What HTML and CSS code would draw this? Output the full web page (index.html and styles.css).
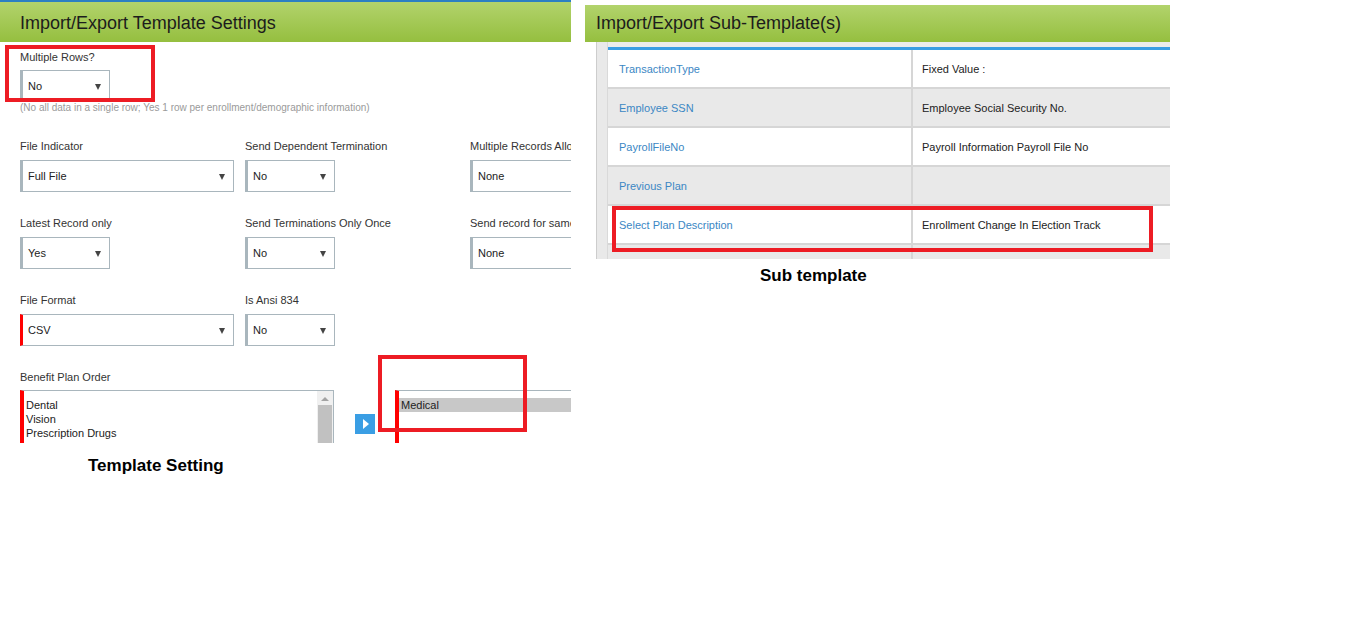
FILE: index.html
```html
<!DOCTYPE html>
<html lang="en">

<head>
  <meta charset="UTF-8">
  <meta name="viewport" content="width=device-width, initial-scale=1.0">
  <title>Import/Export Templates</title>
  <link rel="stylesheet" href="styles.css">
</head>

<body>
  <div class="page">
    <div class="col-left">
      <section class="panel settings">
        <h2 class="panel-head">Import/Export Template Settings</h2>
        <div class="panel-body">
          <div class="field-row first">
            <div class="field">
              <label>Multiple Rows?</label>
              <div class="select sm"><span>No</span><i class="caret"></i></div>
            </div>
          </div>
          <p class="hint">(No all data in a single row; Yes 1 row per enrollment/demographic information)</p>

          <div class="field-row">
            <div class="field">
              <label>File Indicator</label>
              <div class="select lg"><span>Full File</span><i class="caret"></i></div>
            </div>
            <div class="field">
              <label>Send Dependent Termination</label>
              <div class="select sm"><span>No</span><i class="caret"></i></div>
            </div>
            <div class="field">
              <label>Multiple Records Allowed</label>
              <div class="select lg"><span>None</span><i class="caret"></i></div>
            </div>
          </div>

          <div class="field-row">
            <div class="field">
              <label>Latest Record only</label>
              <div class="select sm"><span>Yes</span><i class="caret"></i></div>
            </div>
            <div class="field">
              <label>Send Terminations Only Once</label>
              <div class="select sm"><span>No</span><i class="caret"></i></div>
            </div>
            <div class="field">
              <label>Send record for same day changes</label>
              <div class="select lg"><span>None</span><i class="caret"></i></div>
            </div>
          </div>

          <div class="field-row">
            <div class="field">
              <label>File Format</label>
              <div class="select lg required"><span>CSV</span><i class="caret"></i></div>
            </div>
            <div class="field">
              <label>Is Ansi 834</label>
              <div class="select sm"><span>No</span><i class="caret"></i></div>
            </div>
          </div>

          <label class="plan-label">Benefit Plan Order</label>
          <div class="plan-row">
            <div class="listbox">
              <ul class="list-items">
                <li>Dental</li>
                <li>Vision</li>
                <li>Prescription Drugs</li>
              </ul>
              <div class="scrollbar">
                <i class="scroll-up"></i>
                <div class="scroll-thumb"></div>
              </div>
            </div>
            <button class="btn-move"><i></i></button>
            <div class="listbox target">
              <ul class="list-items">
                <li class="selected">Medical</li>
              </ul>
            </div>
          </div>
        </div>
        <div class="mark mark-rows"></div>
        <div class="mark mark-medical"></div>
      </section>
      <p class="caption caption-left">Template Setting</p>
    </div>

    <div class="col-right">
      <section class="panel subs">
        <h2 class="panel-head">Import/Export Sub-Template(s)</h2>
        <div class="sub-body">
          <div class="gutter"></div>
          <div class="sub-grid">
            <div class="sub-row">
              <div class="cell name">TransactionType</div>
              <div class="cell">Fixed Value :</div>
            </div>
            <div class="sub-row alt">
              <div class="cell name">Employee SSN</div>
              <div class="cell">Employee Social Security No.</div>
            </div>
            <div class="sub-row">
              <div class="cell name">PayrollFileNo</div>
              <div class="cell">Payroll Information Payroll File No</div>
            </div>
            <div class="sub-row alt">
              <div class="cell name">Previous Plan</div>
              <div class="cell"></div>
            </div>
            <div class="sub-row">
              <div class="cell name">Select Plan Description</div>
              <div class="cell">Enrollment Change In Election Track</div>
            </div>
            <div class="sub-row alt">
              <div class="cell name"></div>
              <div class="cell"></div>
            </div>
          </div>
        </div>
        <div class="mark mark-plan"></div>
      </section>
      <p class="caption caption-right">Sub template</p>
    </div>
  </div>
</body>

</html>
```

FILE: styles.css
```css
body {
  margin: 0;
  background: #fff;
  font-family: "Liberation Sans", Arial, sans-serif;
  color: #333;
}

.page {
  display: flex;
  gap: 14px;
}

.panel {
  position: relative;
  overflow: hidden;
}

.panel-head {
  margin: 0;
  font-size: 18px;
  font-weight: normal;
  color: #1c1c1c;
  background: linear-gradient(#b2d36c, #95bf3f);
}

/* left: template settings */
.settings {
  width: 571px;
  height: 441px;
  border-top: 2px solid #2b7fc3;
}

.settings .panel-head {
  height: 40px;
  line-height: 42px;
  padding-left: 20px;
}

.panel-body {
  padding: 8px 0 0 20px;
}

.field-row {
  display: grid;
  grid-template-columns: 225px 225px 225px;
  margin-bottom: 24px;
}

.field-row.first {
  margin-bottom: 0;
}

.field label,
.plan-label {
  display: block;
  height: 14px;
  line-height: 14px;
  font-size: 11px;
  color: #333;
  white-space: nowrap;
  margin-bottom: 7px;
}

.field-row.first label {
  margin-bottom: 6px;
}

.select {
  position: relative;
  box-sizing: border-box;
  height: 32px;
  line-height: 30px;
  padding-left: 5px;
  font-size: 11px;
  color: #222;
  border: 1px solid #a9b6bd;
  border-left: 3px solid #a9b6bd;
  background: #fff;
}

.select.sm {
  width: 90px;
}

.select.lg {
  width: 214px;
}

.select.required {
  border-left-color: #f00;
}

.caret {
  position: absolute;
  right: 8px;
  top: 13px;
  width: 0;
  height: 0;
  border-left: 3.5px solid transparent;
  border-right: 3.5px solid transparent;
  border-top: 6px solid #444;
}

.hint {
  margin: 0 0 25px;
  height: 12px;
  line-height: 12px;
  font-size: 10px;
  color: #9a9a9a;
  white-space: nowrap;
}

.plan-label {
  margin-bottom: 6px;
}

.plan-row {
  display: flex;
  align-items: flex-start;
}

.listbox {
  display: flex;
  box-sizing: border-box;
  width: 314px;
  height: 60px;
  border: 1px solid #a9b6bd;
  border-left: 4px solid #f00;
}

.list-items {
  flex: 1;
  margin: 0;
  padding: 7px 0 0;
  list-style: none;
}

.list-items li {
  height: 14px;
  line-height: 14px;
  padding-left: 2px;
  font-size: 11px;
  color: #222;
}

.list-items li.selected {
  background: #c8c8c8;
}

.scrollbar {
  width: 16px;
  background: #f0f0f0;
  display: flex;
  flex-direction: column;
  align-items: center;
}

.scroll-up {
  margin: 6px 0 4px;
  width: 0;
  height: 0;
  border-left: 4px solid transparent;
  border-right: 4px solid transparent;
  border-bottom: 4px solid #a3a3a3;
}

.scroll-thumb {
  width: 14px;
  flex: 1;
  background: #c1c1c1;
}

.btn-move {
  display: flex;
  align-items: center;
  justify-content: center;
  width: 20px;
  height: 20px;
  margin: 24px 0 0 21px;
  padding: 0;
  border: none;
  background: #3a9ee4;
}

.btn-move i {
  width: 0;
  height: 0;
  margin-left: 2px;
  border-top: 5px solid transparent;
  border-bottom: 5px solid transparent;
  border-left: 6px solid #fff;
}

.listbox.target {
  flex: 1;
  width: auto;
  margin-left: 20px;
  border-right: none;
  border-bottom: none;
}

/* red annotation boxes */
.mark {
  position: absolute;
  box-sizing: border-box;
  border: 4px solid #ed1c24;
}

.mark-rows {
  left: 5px;
  top: 43px;
  width: 150px;
  height: 57px;
}

.mark-medical {
  left: 378px;
  top: 353px;
  width: 149px;
  height: 77px;
}

.mark-plan {
  left: 27px;
  top: 201px;
  width: 541px;
  height: 46px;
}

.caption {
  margin: 0;
  font-size: 17px;
  font-weight: bold;
  color: #000;
  line-height: 20px;
}

.caption-left {
  margin: 13px 0 0 88px;
}

/* right: sub templates */
.col-right {
  margin-top: 5px;
}

.subs {
  width: 585px;
}

.subs .panel-head {
  height: 37px;
  line-height: 37px;
  padding-left: 11px;
}

.sub-body {
  display: flex;
  height: 217px;
  overflow: hidden;
}

.gutter {
  box-sizing: border-box;
  width: 12px;
  margin-left: 11px;
  background: #e9e9e9;
  border-left: 1px solid #cdcdcd;
  border-right: 1px solid #d9d9d9;
}

.sub-grid {
  flex: 1;
  padding-top: 5px;
  background: #ececec;
}

.sub-row {
  display: grid;
  grid-template-columns: 305px 1fr;
  box-sizing: border-box;
  height: 39px;
  border-bottom: 2px solid #d6d6d6;
  background: #fff;
}

.sub-row:first-child {
  border-top: 3px solid #3a9ee4;
  height: 42px;
}

.sub-row.alt {
  background: #e9e9e9;
}

.cell {
  display: flex;
  align-items: center;
  padding: 1px 0 0 9px;
  font-size: 11px;
  color: #222;
  white-space: nowrap;
}

.cell.name {
  padding-left: 11px;
  border-right: 2px solid #d6d6d6;
  color: #3b87c4;
}

.caption-right {
  margin: 7px 0 0 175px;
}
```
